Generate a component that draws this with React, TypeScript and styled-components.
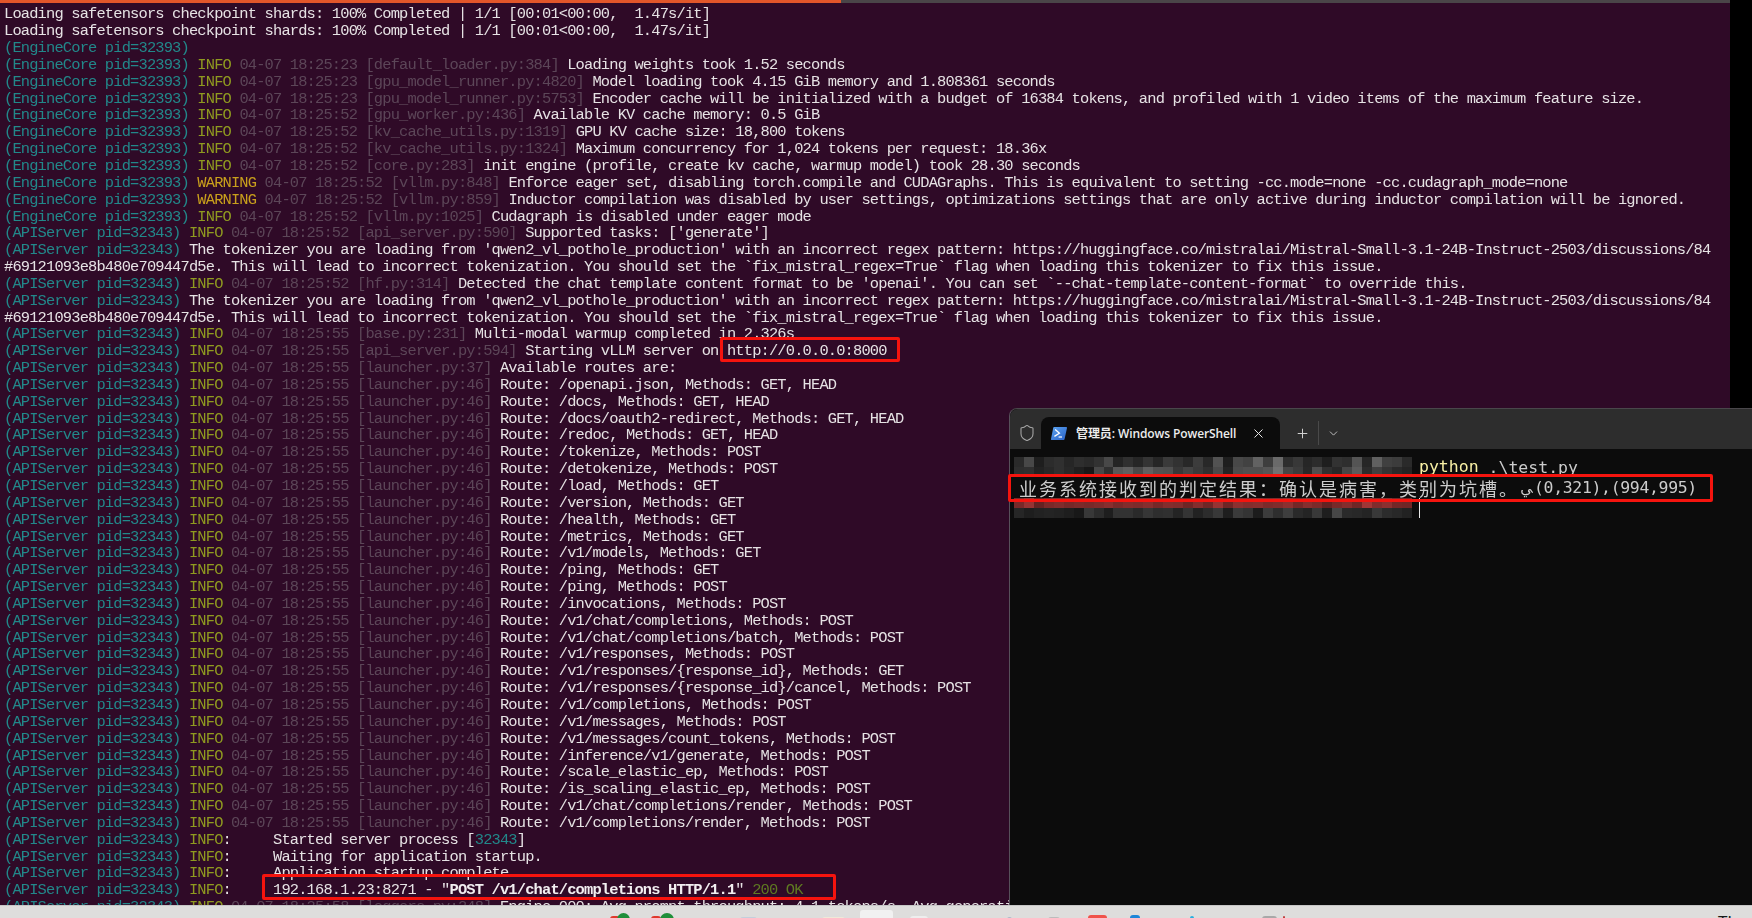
import React from "react";
import styled, { createGlobalStyle } from "styled-components";
import { Shield, X, Plus, ChevronDown } from "lucide-react";

const Global = createGlobalStyle`
  html, body { margin: 0; padding: 0; background: #000; }
  #root { width: 1752px; height: 918px; }
`;

const Page = styled.div`
  width: 1752px;
  height: 918px;
  display: flex;
  flex-direction: column;
  overflow: hidden;
`;

const Desktop = styled.div`
  position: relative;
  flex: 1;
  min-height: 0;
  display: flex;
  background: #000;
`;

const UbuntuTerminal = styled.section`
  width: 1730px;
  display: flex;
  flex-direction: column;
  background: #2f0a27;
  overflow: hidden;
`;

const ProgressTrack = styled.div`
  height: 3px;
  flex: none;
  background: #4a4548;
`;

const ProgressFill = styled.div`
  width: 841px;
  height: 100%;
  background: #e2562a;
`;

const LogBody = styled.div`
  padding: 3.4px 0 0 4px;
  font-family: "Liberation Mono", "DejaVu Sans Mono", monospace;
  font-size: 15.4px;
  letter-spacing: -0.83px;
  line-height: 16.85px;
  color: #e6e2e4;
  filter: blur(0.35px);
`;

const LogLine = styled.div`
  height: 16.85px;
  white-space: pre;
`;

const Tone = styled.span<{ $tone: "proc" | "info" | "warn" | "dim" | "ok" | "strong" }>`
  color: ${(p) =>
    ({ proc: "#22888a", info: "#8f9a20", warn: "#c9a01c", dim: "#5c4658", ok: "#5f7a22", strong: "#f2eef0" })[p.$tone]};
  font-weight: ${(p) => (p.$tone === "strong" ? 700 : 400)};
`;

const Gutter = styled.div`
  flex: 1;
  background: #000;
`;

const Callout = styled.div<{ $x: number; $y: number; $w: number; $h: number }>`
  position: absolute;
  left: ${(p) => p.$x}px;
  top: ${(p) => p.$y}px;
  width: ${(p) => p.$w}px;
  height: ${(p) => p.$h}px;
  box-sizing: border-box;
  border: 3px solid #f5140e;
  border-radius: 2px;
  z-index: 3;
`;

const PsWindow = styled.section`
  position: absolute;
  left: 1009px;
  top: 408px;
  right: 0;
  bottom: 0;
  display: flex;
  flex-direction: column;
  background: #0c0c0c;
  border-left: 1px solid #57505a;
  border-top: 1px solid #4a474b;
  border-top-left-radius: 8px;
  box-sizing: border-box;
  z-index: 2;
`;

const TabStrip = styled.div`
  height: 40px;
  flex: none;
  display: flex;
  align-items: flex-end;
  background: #2d2d2d;
  border-top-left-radius: 8px;
  color: #d8d8d8;
`;

const ShieldSlot = styled.div`
  width: 31px;
  height: 32px;
  display: flex;
  align-items: center;
  justify-content: center;
  padding-left: 2px;
  box-sizing: border-box;
  color: #a8a8a8;
`;

const Tab = styled.div`
  width: 239px;
  height: 32px;
  display: flex;
  align-items: center;
  padding-left: 10px;
  box-sizing: border-box;
  background: #0c0c0c;
  border-radius: 8px 8px 0 0;
`;

const TabTitle = styled.span`
  margin-left: 9px;
  width: 158px;
  font-family: "Open Sans", "Noto Sans CJK SC", sans-serif;
  font-size: 12px;
  font-weight: 600;
  letter-spacing: -0.1px;
  color: #ececec;
  white-space: nowrap;
`;

const TabClose = styled.span`
  margin-left: 17px;
  display: flex;
  color: #e4e4e4;
`;

const TabActions = styled.div`
  height: 32px;
  display: flex;
  align-items: center;
  margin-left: 15px;
  color: #d0d0d0;
`;

const ActionDivider = styled.span`
  width: 1px;
  height: 24px;
  margin: 0 8px 0 8px;
  background: #4a4a4a;
`;

const Console = styled.div`
  padding: 8px 0 0 4px;
  display: flex;
  flex-direction: column;
  font-family: "DejaVu Sans Mono", "Noto Sans CJK SC", monospace;
  font-size: 16.5px;
  color: #cccccc;
  filter: blur(0.2px);
`;

const ConsoleRow = styled.div`
  height: 20.4px;
  display: flex;
  align-items: center;
  white-space: pre;
  position: relative;
`;

const Mosaic = styled.div`
  width: 398px;
  height: 20px;
  display: grid;
  grid-template-columns: repeat(40, 1fr);
  grid-template-rows: 10px 10px;
  flex: none;
`;

const Command = styled.span`
  margin-left: 7px;
  color: #f9f1a5;
  line-height: 20px;
`;

const Cursor = styled.span`
  width: 1px;
  height: 20px;
  margin-left: 7px;
  background: #e8e8e8;
`;

const ResultText = styled.span`
  margin-left: 5px;
  font-family: "Noto Sans CJK SC", "DejaVu Sans Mono", monospace;
  font-size: 18px;
  letter-spacing: 2px;
  text-spacing-trim: space-all;
  display: inline-block;
  width: 500px;
`;

const Numbers = styled.span`
  font-size: 16.5px;
  letter-spacing: -0.35px;
`;

const StrayGlyph = styled.span`
  display: inline-block;
  width: 15px;
  text-align: center;
  font-family: "DejaVu Sans", sans-serif;
  font-size: 15px;
`;

const Taskbar = styled.footer`
  height: 13px;
  flex: none;
  display: flex;
  align-items: flex-start;
  padding-top: 7px;
  box-sizing: border-box;
  background: #dedddc;
  border-top: 1px solid #c6c6c6;
  overflow: hidden;
`;

const Tip = styled.span<{ $gap: number; $w: number; $c: string; $top?: number; $round?: boolean }>`
  flex: none;
  margin-left: ${(p) => p.$gap}px;
  margin-top: ${(p) => p.$top ?? 0}px;
  width: ${(p) => p.$w}px;
  height: 14px;
  background: ${(p) => p.$c};
  border-radius: ${(p) => (p.$round ? "50%" : "3px 3px 0 0")};
`;

const Clock = styled.span`
  margin-left: 433px;
  font-family: "Noto Sans", sans-serif;
  font-size: 17px;
  line-height: 17px;
  color: #1a1a1a;
  white-space: nowrap;
`;

const PS = "(APIServer pid=32343) ";
const ES = "(EngineCore pid=32393) ";

type Row = [string, string, string, string, string];

const rows: Row[] = [
  [ES, "INFO", "04-07 18:25:23", "[default_loader.py:384]", "Loading weights took 1.52 seconds"],
  [ES, "INFO", "04-07 18:25:23", "[gpu_model_runner.py:4820]", "Model loading took 4.15 GiB memory and 1.808361 seconds"],
  [ES, "INFO", "04-07 18:25:23", "[gpu_model_runner.py:5753]", "Encoder cache will be initialized with a budget of 16384 tokens, and profiled with 1 video items of the maximum feature size."],
  [ES, "INFO", "04-07 18:25:52", "[gpu_worker.py:436]", "Available KV cache memory: 0.5 GiB"],
  [ES, "INFO", "04-07 18:25:52", "[kv_cache_utils.py:1319]", "GPU KV cache size: 18,800 tokens"],
  [ES, "INFO", "04-07 18:25:52", "[kv_cache_utils.py:1324]", "Maximum concurrency for 1,024 tokens per request: 18.36x"],
  [ES, "INFO", "04-07 18:25:52", "[core.py:283]", "init engine (profile, create kv cache, warmup model) took 28.30 seconds"],
  [ES, "WARNING", "04-07 18:25:52", "[vllm.py:848]", "Enforce eager set, disabling torch.compile and CUDAGraphs. This is equivalent to setting -cc.mode=none -cc.cudagraph_mode=none"],
  [ES, "WARNING", "04-07 18:25:52", "[vllm.py:859]", "Inductor compilation was disabled by user settings, optimizations settings that are only active during inductor compilation will be ignored."],
  [ES, "INFO", "04-07 18:25:52", "[vllm.py:1025]", "Cudagraph is disabled under eager mode"],
  [PS, "INFO", "04-07 18:25:52", "[api_server.py:590]", "Supported tasks: ['generate']"],
];

const tokenizerWarn =
  "The tokenizer you are loading from 'qwen2_vl_pothole_production' with an incorrect regex pattern: https://huggingface.co/mistralai/Mistral-Small-3.1-24B-Instruct-2503/discussions/84";
const tokenizerWrap =
  "#69121093e8b480e709447d5e. This will lead to incorrect tokenization. You should set the `fix_mistral_regex=True` flag when loading this tokenizer to fix this issue.";

const routes: [string, string][] = [
  ["/openapi.json", "GET, HEAD"],
  ["/docs", "GET, HEAD"],
  ["/docs/oauth2-redirect", "GET, HEAD"],
  ["/redoc", "GET, HEAD"],
  ["/tokenize", "POST"],
  ["/detokenize", "POST"],
  ["/load", "GET"],
  ["/version", "GET"],
  ["/health", "GET"],
  ["/metrics", "GET"],
  ["/v1/models", "GET"],
  ["/ping", "GET"],
  ["/ping", "POST"],
  ["/invocations", "POST"],
  ["/v1/chat/completions", "POST"],
  ["/v1/chat/completions/batch", "POST"],
  ["/v1/responses", "POST"],
  ["/v1/responses/{response_id}", "GET"],
  ["/v1/responses/{response_id}/cancel", "POST"],
  ["/v1/completions", "POST"],
  ["/v1/messages", "POST"],
  ["/v1/messages/count_tokens", "POST"],
  ["/inference/v1/generate", "POST"],
  ["/scale_elastic_ep", "POST"],
  ["/is_scaling_elastic_ep", "POST"],
  ["/v1/chat/completions/render", "POST"],
  ["/v1/completions/render", "POST"],
];

const Entry = ({ row }: { row: Row }) => (
  <LogLine>
    <Tone $tone="proc">{row[0]}</Tone>
    <Tone $tone={row[1] === "WARNING" ? "warn" : "info"}>{row[1]}</Tone>{" "}
    <Tone $tone="dim">{row[2]} {row[3]}</Tone> {row[4]}
  </LogLine>
);

const Uvicorn = ({ children }: { children: React.ReactNode }) => (
  <LogLine>
    <Tone $tone="proc">{PS}</Tone>
    <Tone $tone="info">INFO</Tone>:     {children}
  </LogLine>
);

const gray = (v: number) => `rgb(${v},${v},${v})`;
const red = (v: number) => `rgb(${v},${Math.round(v * 0.34)},${Math.round(v * 0.34)})`;

const top1 = [42,72,30,44,48,38,46,42,50,72,36,48,38,52,38,58,50,40,60,40,82,30,72,66,98,62,106,46,56,38,44,30,50,46,84,38,96,64,60,42];
const top2 = [46,48,34,40,48,40,32,24,72,48,88,96,74,96,82,80,56,68,58,48,74,36,76,80,80,86,114,70,60,40,78,48,40,70,92,44,64,52,42,36];
const red1 = [120,150,100,122,128,118,124,120,126,136,120,130,125,134,118,132,128,110,132,112,150,110,140,132,136,124,128,140,116,134,124,100,120,132,112,160,128,140,116,112];
const bot1 = [38,30,34,36,34,30,24,56,44,30,50,50,42,54,46,48,36,52,34,44,56,30,58,52,28,60,46,62,42,36,56,30,70,42,40,36,56,44,40,34];

const MosaicRows = ({ a, b, tone }: { a: number[]; b: number[]; tone: (v: number) => string }) => (
  <Mosaic>
    {a.map((v, i) => <span key={`a${i}`} style={{ background: tone(v) }} />)}
    {b.map((v, i) => <span key={`b${i}`} style={{ background: gray(v) }} />)}
  </Mosaic>
);

const PsIcon = () => (
  <svg width="16" height="13" viewBox="0 0 16 13">
    <defs>
      <linearGradient id="psg" x1="0" y1="0" x2="1" y2="1">
        <stop offset="0" stopColor="#5aa2ef" />
        <stop offset="1" stopColor="#2a62c8" />
      </linearGradient>
    </defs>
    <path d="M3 0h12.2c.6 0 .9.4.8 1l-2.4 11c-.1.6-.6 1-1.2 1H.8c-.6 0-.9-.4-.8-1L2.2.9C2.3.4 2.6 0 3 0z" fill="url(#psg)" />
    <path d="M4.2 2.6 8.4 6.2 3.4 9.4" fill="none" stroke="#fff" strokeWidth="1.3" />
    <path d="M7.6 10h3.4" stroke="#fff" strokeWidth="1.2" />
  </svg>
);

export default function App() {
  return (
    <Page>
      <Global />
      <Desktop>
        <UbuntuTerminal>
          <ProgressTrack><ProgressFill /></ProgressTrack>
          <LogBody>
            <LogLine>Loading safetensors checkpoint shards: 100% Completed | 1/1 [00:01{"<"}00:00,  1.47s/it]</LogLine>
            <LogLine>Loading safetensors checkpoint shards: 100% Completed | 1/1 [00:01{"<"}00:00,  1.47s/it]</LogLine>
            <LogLine><Tone $tone="proc">{ES}</Tone></LogLine>
            {rows.map((r, i) => <Entry key={i} row={r} />)}
            <LogLine><Tone $tone="proc">{PS}</Tone>{tokenizerWarn}</LogLine>
            <LogLine>{tokenizerWrap}</LogLine>
            <Entry row={[PS, "INFO", "04-07 18:25:52", "[hf.py:314]", "Detected the chat template content format to be 'openai'. You can set `--chat-template-content-format` to override this."]} />
            <LogLine><Tone $tone="proc">{PS}</Tone>{tokenizerWarn}</LogLine>
            <LogLine>{tokenizerWrap}</LogLine>
            <Entry row={[PS, "INFO", "04-07 18:25:55", "[base.py:231]", "Multi-modal warmup completed in 2.326s"]} />
            <Entry row={[PS, "INFO", "04-07 18:25:55", "[api_server.py:594]", "Starting vLLM server on http://0.0.0.0:8000"]} />
            <Entry row={[PS, "INFO", "04-07 18:25:55", "[launcher.py:37]", "Available routes are:"]} />
            {routes.map(([path, methods], i) => (
              <Entry key={i} row={[PS, "INFO", "04-07 18:25:55", "[launcher.py:46]", `Route: ${path}, Methods: ${methods}`]} />
            ))}
            <Uvicorn>Started server process [<Tone $tone="proc">32343</Tone>]</Uvicorn>
            <Uvicorn>Waiting for application startup.</Uvicorn>
            <Uvicorn>Application startup complete.</Uvicorn>
            <Uvicorn>192.168.1.23:8271 - "<Tone $tone="strong">POST /v1/chat/completions HTTP/1.1</Tone>" <Tone $tone="ok">200 OK</Tone></Uvicorn>
            <Entry row={[PS, "INFO", "04-07 18:25:58", "[loggers.py:248]", "Engine 000: Avg prompt throughput: 4.1 tokens/s, Avg generation throughput: 5.2 tokens/s"]} />
          </LogBody>
        </UbuntuTerminal>
        <Gutter />
        <Callout $x={720} $y={337} $w={180} $h={25} />
        <Callout $x={262} $y={874} $w={574} $h={26} />
        <PsWindow>
          <TabStrip>
            <ShieldSlot><Shield size={18} strokeWidth={1.4} /></ShieldSlot>
            <Tab>
              <PsIcon />
              <TabTitle>管理员: Windows PowerShell</TabTitle>
              <TabClose><X size={15} strokeWidth={1.6} /></TabClose>
            </Tab>
            <TabActions>
              <Plus size={15} strokeWidth={1.6} />
              <ActionDivider />
              <ChevronDown size={13} strokeWidth={1.6} />
            </TabActions>
          </TabStrip>
          <Console>
            <ConsoleRow>
              <MosaicRows a={top1} b={top2} tone={gray} />
              <Command>python</Command><span> .\test.py</span>
            </ConsoleRow>
            <ConsoleRow>
              <ResultText>业务系统接收到的判定结果：确认是病害，类别为坑槽。</ResultText>
              <StrayGlyph>ﻲ</StrayGlyph>
              <Numbers>(0,321),(994,995)</Numbers>
            </ConsoleRow>
            <ConsoleRow>
              <MosaicRows a={red1} b={bot1} tone={red} />
              <Cursor />
            </ConsoleRow>
          </Console>
          <Callout $x={-2} $y={65} $w={705} $h={28} />
        </PsWindow>
      </Desktop>
      <Taskbar>
        <Tip $gap={610} $w={10} $c="#e0382c" $top={3} />
        <Tip $gap={-3} $w={13} $c="#1f8f3a" $round />
        <Tip $gap={21} $w={10} $c="#e0382c" $top={3} />
        <Tip $gap={-1} $w={14} $c="#1f8f3a" $round />
        <Tip $gap={66} $w={17} $c="#c3cfdc" $top={4} />
        <Tip $gap={65} $w={23} $c="#efe9d8" $top={4} />
        <Tip $gap={15} $w={33} $c="#f1f1f1" $top={-3} />
        <Tip $gap={17} $w={18} $c="#eeeeee" $top={3} />
        <Tip $gap={79} $w={5} $c="#aeb9c9" $top={4} />
        <Tip $gap={36} $w={12} $c="#bcbcbc" $top={4} />
        <Tip $gap={28} $w={19} $c="#f0524a" $top={2} />
        <Tip $gap={23} $w={10} $c="#1e86d8" $top={2} />
        <Tip $gap={50} $w={4} $c="#28b0e0" $top={3} />
        <Tip $gap={68} $w={15} $c="#a8a8a8" $top={3} />
        <Tip $gap={6} $w={2} $c="#c04040" $top={3} />
        <Clock>Thu</Clock>
      </Taskbar>
    </Page>
  );
}
